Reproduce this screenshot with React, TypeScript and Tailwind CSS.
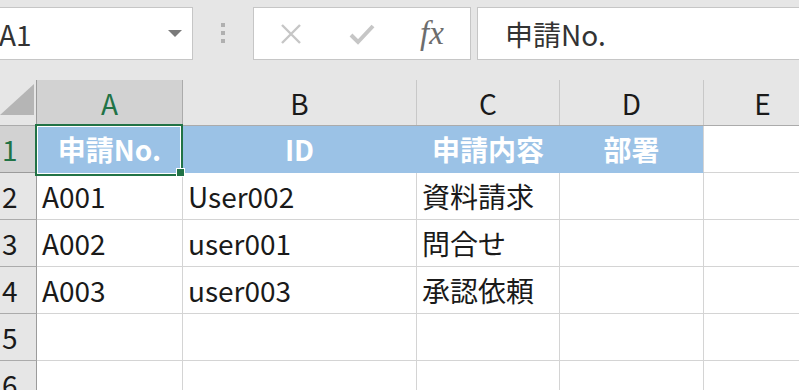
import React from 'react';

const FONT = "font-['Noto_Sans_CJK_JP','Noto_Sans',sans-serif]";

const columns = [
  { key: 'A', width: 'w-[146px]' },
  { key: 'B', width: 'w-[234px]' },
  { key: 'C', width: 'w-[143px]' },
  { key: 'D', width: 'w-[144px]' },
];

const headerRow = ['申請No.', 'ID', '申請内容', '部署'];

const dataRows = [
  ['A001', 'User002', '資料請求', ''],
  ['A002', 'user001', '問合せ', ''],
  ['A003', 'user003', '承認依頼', ''],
  ['', '', '', ''],
  ['', '', '', ''],
];

export default function App() {
  return (
    <div className={`relative h-[390px] w-[799px] overflow-hidden bg-white text-[#1a1a1a] ${FONT}`}>
      {/* Formula bar */}
      <div className="flex h-[80px] bg-[#e6e6e6] pt-[7px]">
        <div className="flex h-[53px] w-[193px] items-center justify-between border border-l-0 border-[#c6c6c6] bg-white pr-[10px]">
          <span className="-ml-px text-[28px] leading-none text-[#333]">A1</span>
          <span className="h-0 w-0 border-x-[7px] border-t-[7px] border-x-transparent border-t-[#7a7a7a]" />
        </div>
        <div className="flex w-[60px] flex-col items-center gap-[4px] pt-[16px]">
          <span className="h-[4px] w-[4px] bg-[#b0b0b0]" />
          <span className="h-[4px] w-[4px] bg-[#b0b0b0]" />
          <span className="h-[4px] w-[4px] bg-[#b0b0b0]" />
        </div>
        <div className="flex h-[53px] w-[218px] items-center border border-[#c6c6c6] bg-white">
          <svg className="ml-[26px]" width="22" height="22" viewBox="0 0 22 22">
            <path d="M2 2 L20 20 M20 2 L2 20" stroke="#c6c6c6" strokeWidth="2.4" fill="none" />
          </svg>
          <svg className="ml-[47px]" width="26" height="22" viewBox="0 0 26 22">
            <path d="M2 12 L9 19 L24 3" stroke="#c6c6c6" strokeWidth="4" fill="none" />
          </svg>
          <span className="ml-[45px] font-['Liberation_Serif',serif] text-[33px] italic leading-none text-[#6d6d6d]">
            fx
          </span>
        </div>
        <div className="ml-[6px] flex h-[53px] flex-1 items-center border border-r-0 border-[#c6c6c6] bg-white pl-[27px]">
          <span className="text-[28px] leading-none text-[#333]">申請No.</span>
        </div>
      </div>

      {/* Column headers */}
      <div className="flex h-[46px] border-b border-[#ababab] bg-[#e6e6e6]">
        <div className="relative w-[37px] border-r border-[#9b9b9b]">
          <div className="absolute right-[2px] top-[4px] h-[31px] w-[34px] bg-[#b5b5b5] [clip-path:polygon(100%_0,100%_100%,0_100%)]" />
        </div>
        {columns.map((c, i) => (
          <div
            key={c.key}
            className={`${c.width} flex items-center justify-center border-r text-[28px] ${
              i === 0 ? 'border-[#ababab] bg-[#d2d2d2] text-[#217346]' : 'border-[#c8c8c8] text-[#1a1a1a]'
            }`}
          >
            {c.key}
          </div>
        ))}
        <div className="flex flex-1 items-center justify-center pl-[22px] text-[28px]">E</div>
      </div>

      {/* Row 1 */}
      <div className="flex h-[47px]">
        <div className="flex w-[37px] items-center border-b border-r border-[#9b9b9b] bg-[#d2d2d2] pl-[2px] text-[28px] text-[#217346]">
          1
        </div>
        {columns.map((c, i) => (
          <div
            key={c.key}
            className={`${c.width} flex items-center justify-center border-b border-r border-[#9bc2e6] bg-[#9bc2e6] text-[28px] font-bold text-white ${
              i === 3 ? 'border-r-[#d4d4d4]' : ''
            }`}
          >
            {headerRow[i]}
          </div>
        ))}
        <div className="flex-1 border-b border-[#d4d4d4]" />
      </div>

      {/* Data rows */}
      {dataRows.map((row, r) => (
        <div key={r} className="flex h-[47px]">
          <div className="flex w-[37px] items-center border-b border-r border-[#9b9b9b] border-b-[#ababab] bg-[#e6e6e6] pl-[2px] text-[28px]">
            {r + 2}
          </div>
          {columns.map((c, i) => (
            <div
              key={c.key}
              className={`${c.width} flex items-center border-b border-r border-[#d4d4d4] pl-[5px] text-[28px]`}
            >
              {row[i]}
            </div>
          ))}
          <div className="flex-1 border-b border-[#d4d4d4]" />
        </div>
      ))}

      {/* Active cell selection */}
      <div className="absolute left-[35px] top-[124px] h-[52px] w-[148px] border-2 border-[#217346]">
        <div className="h-full w-full border border-white" />
      </div>
      <div className="absolute left-[176px] top-[168px] h-[9px] w-[9px] border border-white bg-[#217346]" />
    </div>
  );
}
